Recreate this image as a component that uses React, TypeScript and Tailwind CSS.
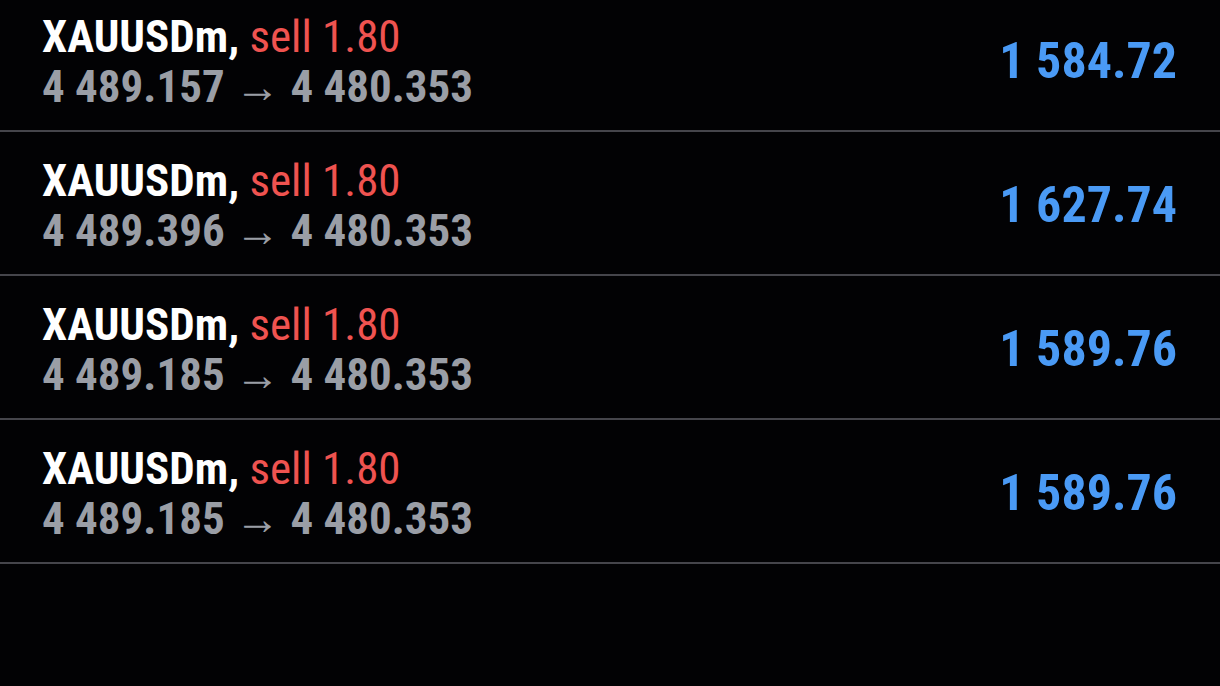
import React from "react";

const rows = [
  { from: "4 489.157", to: "4 480.353", profit: "1 584.72" },
  { from: "4 489.396", to: "4 480.353", profit: "1 627.74" },
  { from: "4 489.185", to: "4 480.353", profit: "1 589.76" },
  { from: "4 489.185", to: "4 480.353", profit: "1 589.76" },
];

export default function App() {
  return (
    <div
      className="w-[1220px] h-[686px] overflow-hidden bg-[#020204]"
      style={{ fontFamily: '"Roboto Condensed", Roboto, "Liberation Sans", sans-serif' }}
    >
      <div className="-mt-3 flex flex-col">
        {rows.map((r, i) => (
          <div
            key={i}
            className="h-[144px] flex items-center justify-between pl-[42px] pr-[43px] pt-[5px] border-b-2 border-[#45454b]"
          >
            <div className="flex flex-col">
              <div className="text-[45px] leading-[50px]">
                <span className="text-white font-bold">XAUUSDm,</span>{" "}
                <span className="text-[#ef5350]">sell 1.80</span>
              </div>
              <div className="text-[45px] leading-[50px] font-bold text-[#9a9ea6]">
                {r.from} <span className="font-normal">→</span> {r.to}
              </div>
            </div>
            <div className="text-[50px] font-bold text-[#4a9af5]">{r.profit}</div>
          </div>
        ))}
      </div>
    </div>
  );
}
